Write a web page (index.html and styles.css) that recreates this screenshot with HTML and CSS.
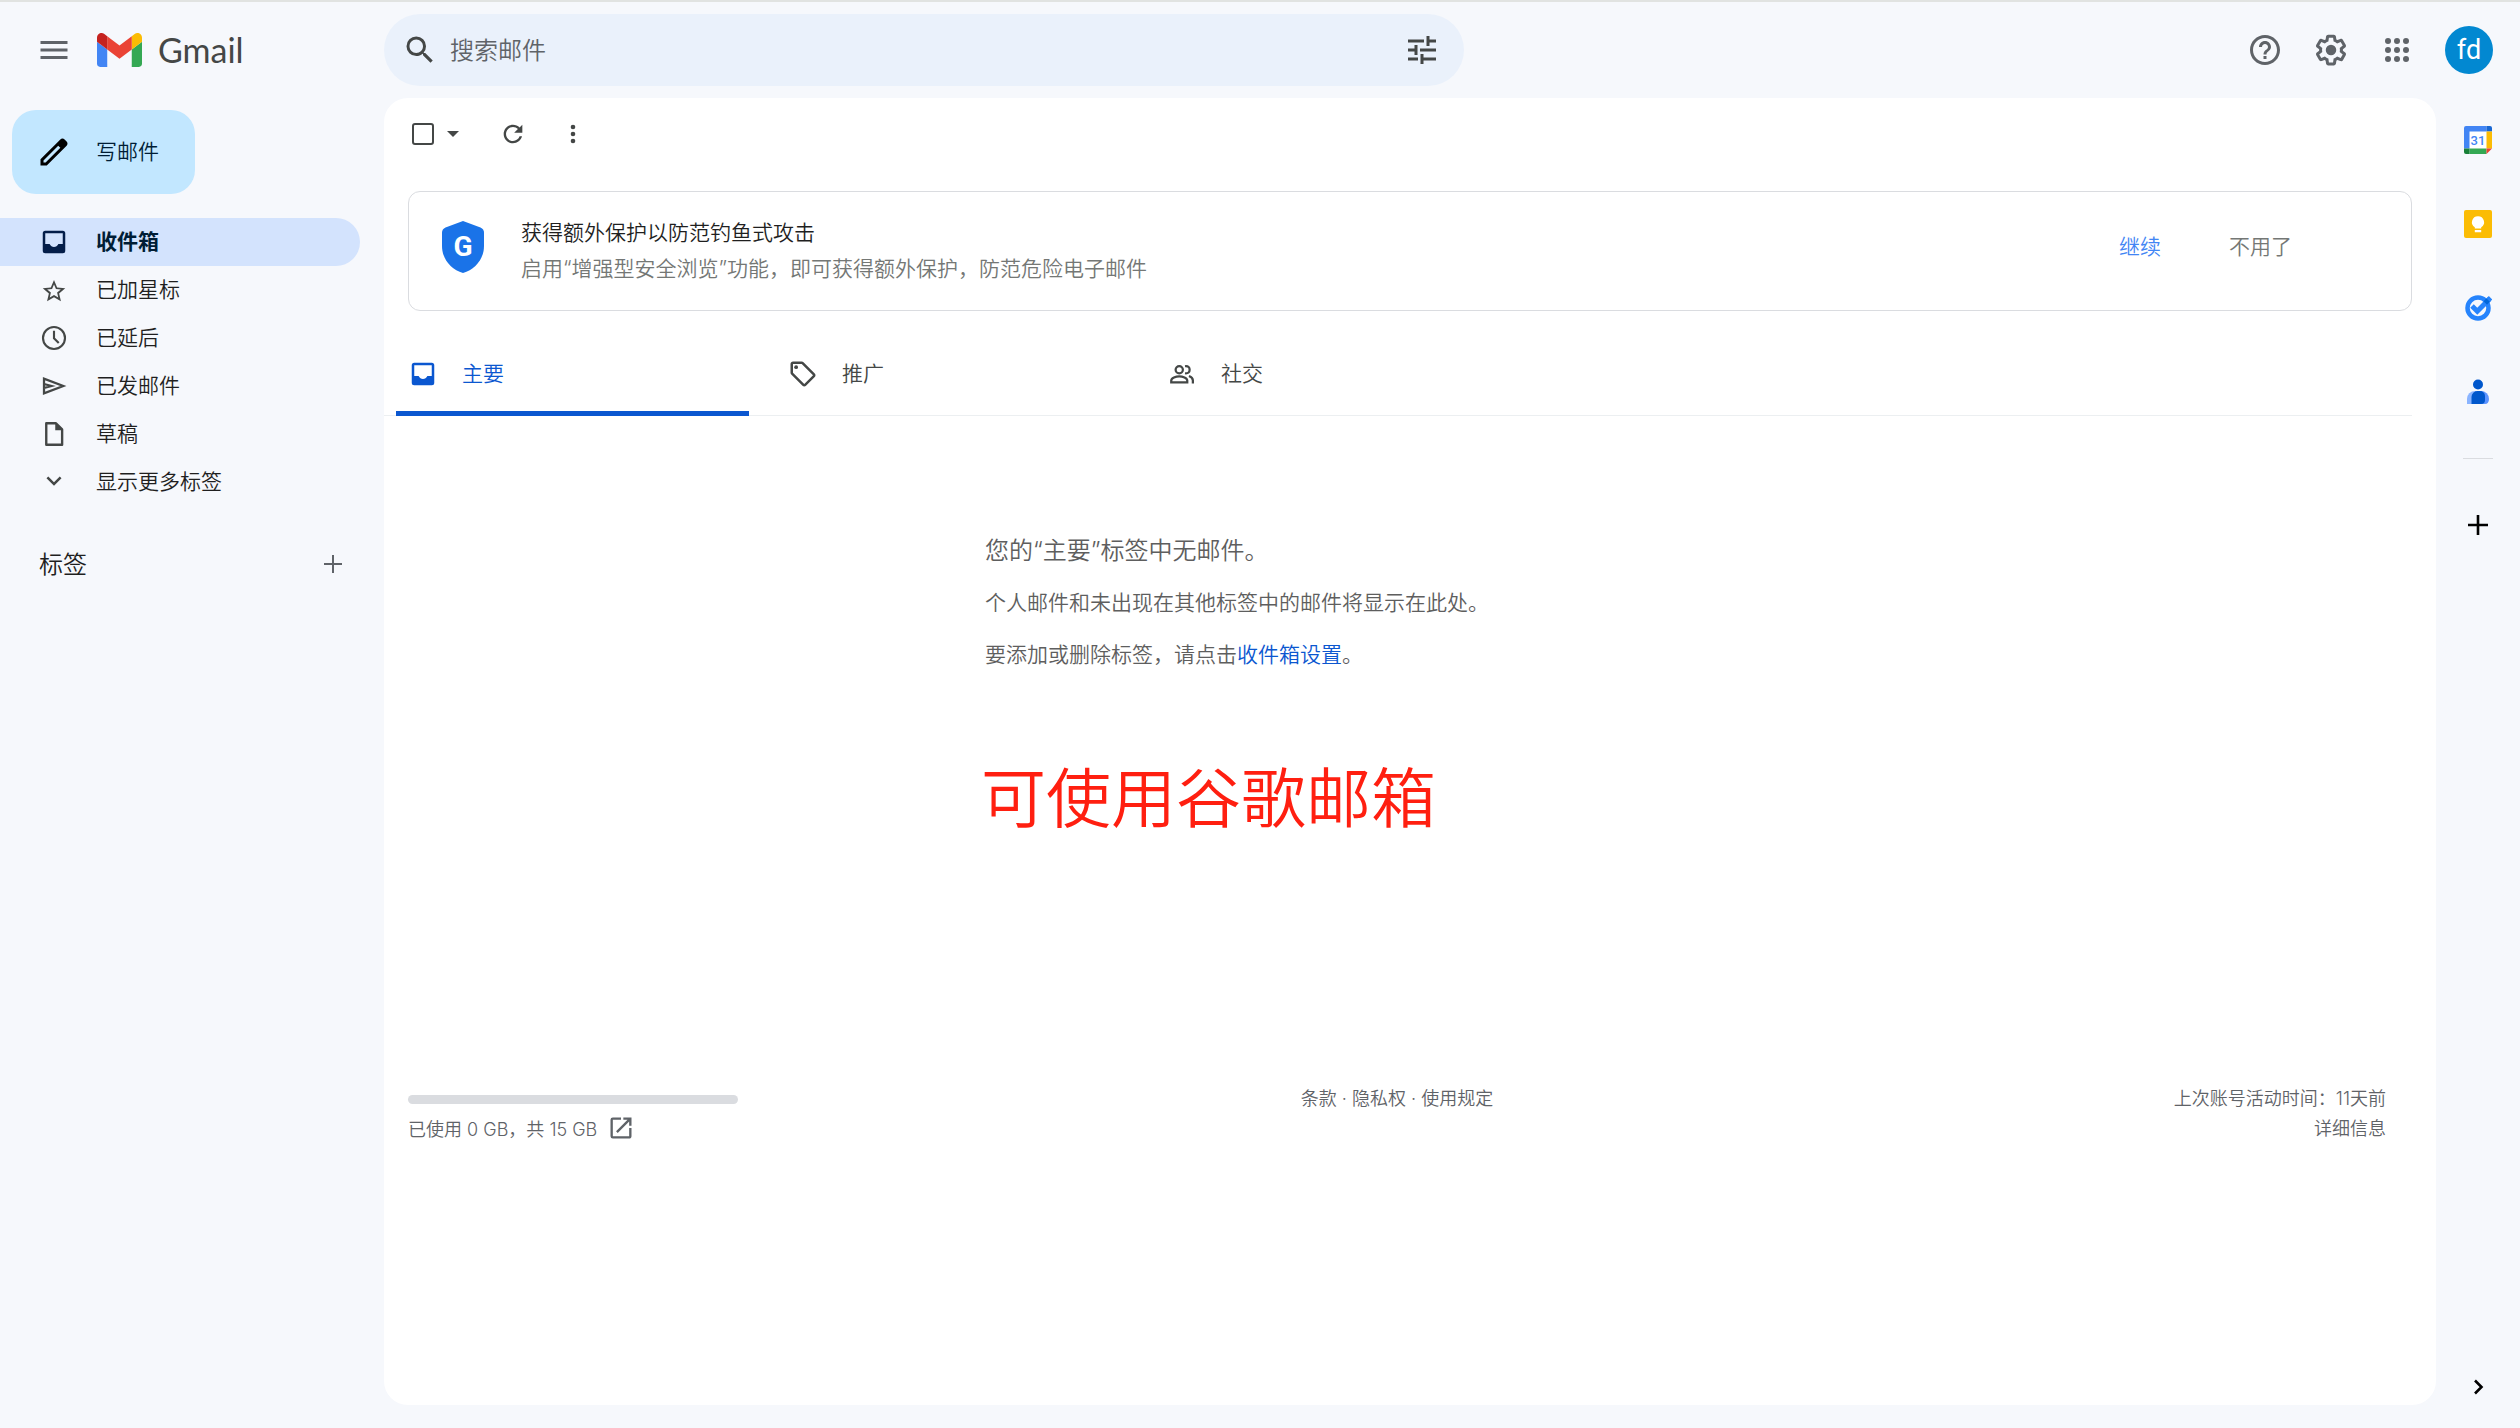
FILE: index.html
```html
<!DOCTYPE html>
<html lang="zh-CN">
<head>
<meta charset="utf-8">
<meta name="viewport" content="width=device-width, initial-scale=1">
<title>Gmail</title>
<link rel="stylesheet" href="styles.css">
</head>
<body>
<header class="topbar">
  <div class="brand">
    <button class="icon-btn" aria-label="主菜单"><svg class="i36" viewBox="0 0 24 24"><path d="M3 18h18v-2H3v2zm0-5h18v-2H3v2zm0-7v2h18V6H3z"/></svg></button>
    <a class="logo" href="#">
      <svg class="logo-mark" viewBox="52 42 88 66"><path fill="#4285f4" d="M58 108h14V74L52 59v43c0 3.32 2.69 6 6 6"/><path fill="#34a853" d="M120 108h14c3.32 0 6-2.69 6-6V59l-20 15"/><path fill="#fbbc04" d="M120 48v26l20-15v-8c0-7.42-8.47-11.65-14.4-7.2"/><path fill="#ea4335" d="M72 74V48l24 18 24-18v26L96 92"/><path fill="#c5221f" d="M52 51v8l20 15V48l-5.6-4.2c-5.94-4.45-14.4-.22-14.4 7.2"/></svg>
      <span class="logo-text">Gmail</span>
    </a>
  </div>
  <form class="search" role="search">
    <button class="icon-btn dark" type="button" aria-label="搜索"><svg class="i36" viewBox="0 0 24 24"><path d="M15.5 14h-.79l-.28-.27A6.47 6.47 0 0 0 16 9.5 6.5 6.5 0 1 0 9.5 16c1.61 0 3.09-.59 4.23-1.57l.27.28v.79l5 4.99L20.49 19l-4.99-5zm-6 0C7.01 14 5 11.99 5 9.5S7.01 5 9.5 5 14 7.01 14 9.5 11.99 14 9.5 14z"/></svg></button>
    <input class="search-input" type="text" placeholder="搜索邮件" aria-label="搜索邮件">
    <button class="icon-btn dark" type="button" aria-label="显示搜索选项"><svg class="i28" viewBox="0 0 28 28"><path fill="none" stroke="currentColor" stroke-width="3" d="M0 5h16M20 0v10M20 5h8M0 14h8M8 9v10M12 14h16M0 23h10M14 18v10M14 23h14"/></svg></button>
  </form>
  <div class="account">
    <button class="icon-btn" aria-label="支持"><svg class="i36" viewBox="0 0 24 24"><path d="M11 18h2v-2h-2v2zm1-16C6.48 2 2 6.48 2 12s4.48 10 10 10 10-4.48 10-10S17.52 2 12 2zm0 18c-4.41 0-8-3.59-8-8s3.59-8 8-8 8 3.59 8 8-3.59 8-8 8zm0-14c-2.21 0-4 1.79-4 4h2c0-1.1.9-2 2-2s2 .9 2 2c0 2-3 1.75-3 5h2c0-2.25 3-2.5 3-5 0-2.21-1.79-4-4-4z"/></svg></button>
    <button class="icon-btn" aria-label="设置"><svg class="i36" viewBox="0 0 24 24"><path d="M13.85 22.25h-3.7c-.74 0-1.36-.54-1.45-1.27l-.27-1.89c-.27-.14-.53-.29-.79-.46l-1.8.72c-.7.26-1.47-.03-1.81-.65L2.2 15.53c-.35-.66-.2-1.44.36-1.88l1.53-1.19c-.01-.15-.02-.3-.02-.46 0-.15.01-.31.02-.46l-1.52-1.19c-.59-.45-.74-1.26-.37-1.88l1.85-3.19c.34-.62 1.11-.9 1.79-.63l1.81.73c.26-.17.52-.32.78-.46l.27-1.91c.09-.7.71-1.25 1.44-1.25h3.7c.74 0 1.36.54 1.45 1.27l.27 1.89c.27.14.53.29.79.46l1.8-.72c.71-.26 1.48.03 1.82.65l1.84 3.18c.36.66.2 1.44-.36 1.88l-1.52 1.19c.01.15.02.3.02.46s-.01.31-.02.46l1.52 1.19c.56.45.72 1.23.37 1.86l-1.86 3.22c-.34.62-1.11.9-1.8.63l-1.8-.72c-.26.17-.52.32-.78.46l-.27 1.91c-.1.68-.72 1.22-1.46 1.22zm-3.23-2h2.76l.37-2.55.53-.22c.44-.18.88-.44 1.34-.78l.45-.34 2.38.96 1.38-2.4-2.03-1.58.07-.56c.03-.26.06-.51.06-.78s-.03-.53-.06-.78l-.07-.56 2.03-1.58-1.39-2.4-2.39.96-.45-.35c-.42-.32-.87-.58-1.33-.77l-.52-.22-.37-2.55h-2.76l-.37 2.55-.53.21c-.44.19-.88.44-1.34.79l-.45.33-2.38-.95-1.39 2.39 2.03 1.58-.07.56a7 7 0 0 0-.06.79c0 .26.02.53.06.78l.07.56-2.03 1.58 1.38 2.4 2.39-.96.45.35c.43.33.86.58 1.33.77l.53.22.38 2.55z"/><circle cx="12" cy="12" r="3.5"/></svg></button>
    <button class="icon-btn" aria-label="Google 应用"><svg class="i36" viewBox="0 0 24 24"><circle cx="6" cy="6" r="2"/><circle cx="12" cy="6" r="2"/><circle cx="18" cy="6" r="2"/><circle cx="6" cy="12" r="2"/><circle cx="12" cy="12" r="2"/><circle cx="18" cy="12" r="2"/><circle cx="6" cy="18" r="2"/><circle cx="12" cy="18" r="2"/><circle cx="18" cy="18" r="2"/></svg></button>
    <button class="avatar" aria-label="Google 账号">fd</button>
  </div>
</header>

<div class="workspace">
  <aside class="sidebar">
    <button class="compose"><svg class="i36" viewBox="0 0 24 24"><path d="M20.41 4.94l-1.35-1.35c-.78-.78-2.05-.78-2.83 0L3 16.82V21h4.18L20.41 7.77c.79-.78.79-2.05 0-2.83zM6.41 19.06L5 19v-1.36l9.82-9.82 1.41 1.41-9.82 9.83z"/></svg><span class="label">写邮件</span></button>
    <nav class="folders">
      <a class="folder active" href="#"><svg class="i30" viewBox="0 0 24 24"><path fill-rule="evenodd" d="M5 3h14a2 2 0 0 1 2 2v14a2 2 0 0 1-2 2H5a2 2 0 0 1-2-2V5a2 2 0 0 1 2-2zm0 2v8.5h3.5c.8 1.5 2 2.4 3.5 2.4s2.7-.9 3.5-2.4H19V5z"/></svg><span class="label">收件箱</span></a>
      <a class="folder" href="#"><svg class="i30" viewBox="0 -1 24 24"><path d="M21 9.500l-6.500-.56L12 3 9.460 8.970 3 9.500l4.910 4.260L6.440 20 12 16.740 17.560 20l-1.470-6.240L21 9.500zM12 14.900l-3.380 2.040.9-3.850-2.990-2.590 3.940-.34L12 6.500l1.540 3.660 3.940.34-2.990 2.590.9 3.850L12 14.900z"/></svg><span class="label">已加星标</span></a>
      <a class="folder" href="#"><svg class="i30" viewBox="0 0 24 24"><g fill="none" stroke="currentColor" stroke-width="1.7"><circle cx="12" cy="12" r="8.800"/><path d="M12 6.200v6l3.800 3.800"/></g></svg><span class="label">已延后</span></a>
      <a class="folder" href="#"><svg class="i30" viewBox="0 0 24 24"><path fill="none" stroke="currentColor" stroke-width="1.800" d="M4 6.200v11.600L19.400 12zM4 10.400l6 1.600-6 1.600"/></svg><span class="label">已发邮件</span></a>
      <a class="folder" href="#"><svg class="i30" viewBox="0 0 24 24"><path fill="none" stroke="currentColor" stroke-width="1.900" stroke-linejoin="round" d="M5.800 3.400h7.800l4.900 4.900v12.300H5.800z"/><path d="M13 3v6h6z"/></svg><span class="label">草稿</span></a>
      <a class="folder" href="#"><svg class="i30" viewBox="0 0 24 24"><path d="M16.590 7.590 12 12.170 7.410 7.590 6 9l6 6 6-6z"/></svg><span class="label">显示更多标签</span></a>
    </nav>
    <div class="labels-head">
      <h2 class="labels-title label">标签</h2>
      <button class="icon-btn" aria-label="创建新标签"><svg class="i30" viewBox="0 0 24 24"><path d="M19.200 12.800h-6.400v6.400h-1.600v-6.400H4.800v-1.600h6.400V4.800h1.600v6.400h6.400z"/></svg></button>
    </div>
  </aside>

  <main class="panel">
    <div class="toolbar">
      <div class="select-all">
        <input class="check" type="checkbox" aria-label="选择">
        <button class="caret-btn" aria-label="选择选项"><svg class="caret" viewBox="0 0 12 6"><path d="M0 0h12L6 6z"/></svg></button>
      </div>
      <button class="icon-btn dark" aria-label="刷新"><svg class="i28" viewBox="0 0 24 24"><path d="M17.650 6.350C16.200 4.900 14.210 4 12 4c-4.420 0-7.990 3.580-7.990 8s3.570 8 7.990 8c3.730 0 6.840-2.550 7.730-6h-2.080c-.82 2.330-3.040 4-5.650 4-3.310 0-6-2.690-6-6s2.690-6 6-6c1.660 0 3.140.69 4.220 1.780L13 11h7V4l-2.350 2.350z"/></svg></button>
      <button class="icon-btn dark" aria-label="更多"><svg class="i28" viewBox="0 0 28 28"><circle cx="14" cy="7" r="2.300"/><circle cx="14" cy="14" r="2.300"/><circle cx="14" cy="21" r="2.300"/></svg></button>
    </div>

    <section class="notice">
      <svg class="shield" viewBox="0 0 42 52"><path fill="#1a73e8" d="M21 0l17.500 6.500Q42 8 42 11.500V25c0 13-9 23.500-21 27C9 48.500 0 38 0 25V11.500Q0 8 3.500 6.500z"/><text class="shield-g" x="21" y="35" text-anchor="middle">G</text></svg>
      <div class="notice-text">
        <h2 class="notice-title">获得额外保护以防范钓鱼式攻击</h2>
        <p class="notice-sub">启用“增强型安全浏览”功能，即可获得额外保护，防范危险电子邮件</p>
      </div>
      <div class="notice-actions">
        <button class="text-btn primary">继续</button>
        <button class="text-btn">不用了</button>
      </div>
    </section>

    <div class="tabs" role="tablist">
      <button class="tab active" role="tab" aria-selected="true"><svg class="i30" viewBox="0 0 24 24"><path fill-rule="evenodd" d="M5 3h14a2 2 0 0 1 2 2v14a2 2 0 0 1-2 2H5a2 2 0 0 1-2-2V5a2 2 0 0 1 2-2zm0 2v8.500h3.500c.8 1.500 2 2.400 3.500 2.400s2.700-.9 3.500-2.400H19V5z"/></svg><span class="label">主要</span></button>
      <button class="tab" role="tab" aria-selected="false"><svg class="i30" viewBox="0 0 24 24"><path d="M21.410 11.580l-9-9C12.050 2.220 11.550 2 11 2H4c-1.100 0-2 .9-2 2v7c0 .55.22 1.050.59 1.420l9 9c.36.36.86.58 1.410.58s1.050-.22 1.410-.59l7-7c.37-.36.59-.86.59-1.410s-.23-1.060-.59-1.420zM13 20.010L4 11V4h7v-.01l9 9-7 7.020z"/><circle cx="6.500" cy="6.500" r="1.500"/></svg><span class="label">推广</span></button>
      <button class="tab" role="tab" aria-selected="false"><svg class="i30" viewBox="0 0 24 24"><g fill="none" stroke="currentColor" stroke-width="1.800"><circle cx="9.800" cy="8.600" r="2.900"/><path d="M3.400 18.600v-1.400c0-2 3.700-3.400 6.400-3.400s6.400 1.400 6.400 3.400v1.400z"/><path d="M14.400 5.800c2.800-.3 3.700 1 3.700 2.800s-1 3.100-3.700 2.800"/><path d="M17.600 13.600c1.900.8 3.100 2 3.100 3.500v2.400"/></g></svg><span class="label">社交</span></button>
    </div>

    <section class="empty">
      <h1 class="empty-title">您的“主要”标签中无邮件。</h1>
      <p class="empty-line">个人邮件和未出现在其他标签中的邮件将显示在此处。</p>
      <p class="empty-line">要添加或删除标签，请点击<a class="link" href="#">收件箱设置</a>。</p>
      <p class="annotation">可使用谷歌邮箱</p>
    </section>

    <footer class="footer">
      <div class="storage">
        <div class="storage-bar"></div>
        <div class="storage-row"><span>已使用 0 GB，共 15 GB</span><a class="storage-link" href="#" aria-label="管理存储空间"><svg class="i28" viewBox="0 0 24 24"><path d="M19 19H5V5h7V3H5a2 2 0 0 0-2 2v14a2 2 0 0 0 2 2h14c1.100 0 2-.9 2-2v-7h-2v7zM14 3v2h3.590l-9.830 9.830 1.410 1.410L19 6.410V10h2V3h-7z"/></svg></a></div>
      </div>
      <div class="legal"><a href="#">条款</a> · <a href="#">隐私权</a> · <a href="#">使用规定</a></div>
      <div class="activity"><div>上次账号活动时间：11天前</div><a href="#">详细信息</a></div>
    </footer>
  </main>

  <aside class="rail">
    <div class="rail-apps">
      <button class="rail-btn" aria-label="日历"><svg class="i28" viewBox="0 0 28 28"><path fill="#fff" d="M5 5h18v18H5z"/><path fill="#4285f4" d="M2 0h20.500v5.500h-17v17H0V2a2 2 0 0 1 2-2z"/><path fill="#1967d2" d="M22.500 0H26a2 2 0 0 1 2 2v3.500h-5.500z"/><path fill="#fbbc04" d="M22.500 5.500H28v17h-5.500z"/><path fill="#34a853" d="M5.500 22.500h17V28h-17z"/><path fill="#188038" d="M0 22.500h5.500V28H2a2 2 0 0 1-2-2z"/><path fill="#ea4335" d="M22.500 22.500H28L22.500 28z"/><text class="cal-day" x="14" y="19" text-anchor="middle">31</text></svg></button>
      <button class="rail-btn" aria-label="Keep"><svg class="i28" viewBox="0 0 28 28"><rect width="28" height="28" rx="2" fill="#fbbc04"/><path fill="#fff" d="M14 6.200a6 6 0 0 0-3.200 11.100v1.200h6.400v-1.200A6 6 0 0 0 14 6.200zM10.800 20h6.400v2.200h-6.400z"/></svg></button>
      <button class="rail-btn" aria-label="Tasks"><svg class="i28" viewBox="0 0 28 28"><circle cx="14" cy="14" r="10.500" fill="none" stroke="#2684fc" stroke-width="4.500"/><path fill="none" stroke="#2684fc" stroke-width="5" d="M8 12l5.300 5.300L25.500 5"/><path fill="#0066da" d="M19.500 7.300l3-3 3.500 3.500-3 3z"/><path fill="#2684fc" d="M22.500 4.300l2.300-2.300 3.500 3.500-2.300 2.300z"/></svg></button>
      <button class="rail-btn" aria-label="通讯录"><svg class="i28" viewBox="0 0 28 28"><circle cx="14" cy="6.500" r="5" fill="#0057cc"/><path fill="#8ab4ff" d="M3 26v-5a8 8 0 0 1 8-8h6v13z"/><path fill="#5c94ff" d="M11 13h6a8 8 0 0 1 8 8c0 3-1.500 5-4 5H11z"/><path fill="#0057cc" d="M7.500 26v-7a6 6 0 0 1 6-6H16a5 5 0 0 1 5 5v4a4 4 0 0 1-4 4z"/></svg></button>
    </div>
    <hr class="rail-line">
    <button class="rail-btn" aria-label="获取插件"><svg class="i28" viewBox="0 0 28 28"><path fill="none" stroke="currentColor" stroke-width="2.600" d="M4 14h20M14 4v20"/></svg></button>
    <button class="rail-btn rail-hide" aria-label="隐藏侧边栏"><svg class="i28" viewBox="0 0 28 28"><path fill="none" stroke="currentColor" stroke-width="2.600" d="M11 7.500l6.500 6.500-6.500 6.500"/></svg></button>
  </aside>
</div>
</body>
</html>
```

FILE: styles.css
```css
* {
  box-sizing: border-box;
}

body {
  margin: 0;
  min-height: 100vh;
  display: flex;
  flex-direction: column;
  border-top: 2px solid #e1e3e1;
  background: #f6f8fc;
  color: #1f1f1f;
  font-family: Inter, "Noto Sans CJK SC", sans-serif;
  font-size: 21px;
  font-weight: 350;
}

h1, h2, p {
  margin: 0;
  font-size: inherit;
  font-weight: inherit;
}

a {
  color: inherit;
  text-decoration: none;
}

button {
  margin: 0;
  padding: 0;
  border: 0;
  background: none;
  color: inherit;
  font: inherit;
  cursor: pointer;
}

svg {
  display: block;
  flex: none;
  fill: currentColor;
}

.i28 { width: 28px; height: 28px; }
.i30 { width: 30px; height: 30px; }
.i36 { width: 36px; height: 36px; }

/* Text beside an icon, lifted to sit on the icon's optical centre */
.label {
  padding-bottom: 4px;
}

.icon-btn {
  display: grid;
  place-items: center;
  width: 60px;
  height: 60px;
  color: #5f6368;
}

.icon-btn.dark {
  color: #444746;
}

/* Top bar */
.topbar {
  display: flex;
  align-items: center;
  height: 96px;
}

.brand {
  display: flex;
  align-items: center;
  flex: none;
  gap: 13px;
  width: 384px;
  padding-left: 24px;
}

.logo {
  display: flex;
  align-items: center;
  gap: 16px;
}

.logo-mark {
  width: 45px;
  height: 34px;
}

.logo-text {
  color: #444746;
  font: 400 34px/40px Lato, sans-serif;
}

.search {
  display: flex;
  align-items: center;
  flex: 0 1 1080px;
  height: 72px;
  padding: 0 12px 0 6px;
  border-radius: 36px;
  background: #eaf1fb;
}

.search-input {
  flex: 1;
  min-width: 0;
  padding: 0;
  border: 0;
  outline: 0;
  background: none;
  color: #1f1f1f;
  font: inherit;
  font-size: 24px;
}

.search-input::placeholder {
  color: #5f6368;
  opacity: 1;
}

.account {
  display: flex;
  align-items: center;
  gap: 6px;
  margin-left: auto;
  padding-right: 27px;
}

.avatar {
  width: 48px;
  height: 48px;
  margin-left: 12px;
  border-radius: 50%;
  background: #0288d1;
  color: #fff;
  font: 400 27px/48px Roboto, sans-serif;
}

/* Columns */
.workspace {
  flex: 1;
  display: grid;
  grid-template-columns: 384px minmax(0, 1fr) 84px;
  padding-bottom: 23px;
}

.sidebar {
  padding-top: 12px;
}

.compose {
  display: flex;
  align-items: center;
  gap: 24px;
  height: 84px;
  margin-left: 12px;
  padding: 0 36px 0 24px;
  border-radius: 24px;
  background: #c2e7ff;
  color: #001d35;
}

.compose svg {
  color: #000;
}

.folders {
  margin: 24px 24px 0 0;
}

.folder {
  display: flex;
  align-items: center;
  gap: 27px;
  height: 48px;
  padding-left: 39px;
  border-radius: 0 24px 24px 0;
}

.folder svg {
  color: #444746;
}

.folder.active {
  background: #d3e3fd;
  color: #001d35;
  font-weight: 700;
}

.folder.active svg {
  color: #041e49;
}

.labels-head {
  display: flex;
  align-items: center;
  justify-content: space-between;
  height: 48px;
  margin-top: 34px;
  padding: 0 21px 0 39px;
}

.labels-title {
  font-size: 24px;
}

/* Mail panel */
.panel {
  border-radius: 24px;
  background: #fff;
}

.toolbar {
  display: flex;
  align-items: center;
  height: 72px;
  padding-left: 28px;
}

.select-all {
  display: flex;
  align-items: center;
  gap: 7px;
  margin-right: 18px;
}

.check {
  appearance: none;
  width: 22px;
  height: 22px;
  margin: 0;
  border: 2px solid #444746;
  border-radius: 3px;
}

.caret-btn {
  display: grid;
  place-items: center;
  width: 24px;
  height: 30px;
  color: #444746;
}

.caret {
  width: 12px;
  height: 6px;
}

.notice {
  display: flex;
  align-items: center;
  margin: 21px 24px 0;
  padding: 0 107px 0 33px;
  height: 120px;
  border: 1px solid #dadce0;
  border-radius: 12px;
}

.shield {
  width: 42px;
  height: 52px;
  margin: 0 37px 8px 0;
}

.shield-g {
  fill: #fff;
  font: 700 28px Roboto, sans-serif;
}

.notice-text {
  flex: 1;
  line-height: 36px;
}

.notice-sub {
  color: #747775;
}

.notice-actions {
  display: flex;
  gap: 44px;
  margin-bottom: 12px;
}

.text-btn {
  padding: 6px 12px;
  color: #747775;
}

.text-btn.primary {
  color: #4285f4;
}

.tabs {
  display: flex;
  height: 84px;
  margin: 21px 24px 0 0;
  border-bottom: 1px solid #eceff1;
}

.tab {
  display: flex;
  align-items: center;
  gap: 24px;
  flex: 0 1 379px;
  padding-left: 25px;
  color: #444746;
}

.tab.active {
  flex: 0 1 353px;
  margin: 0 14px -1px 12px;
  padding: 4px 0 0 12px;
  border-bottom: 5px solid #0b57d0;
  color: #0b57d0;
}

.empty {
  display: flex;
  flex-direction: column;
  gap: 20px;
  max-width: 850px;
  margin: 119px auto 0;
  color: #5e5e5e;
  line-height: 32px;
}

.empty-title {
  font-size: 24px;
}

.link {
  color: #0b57d0;
}

.annotation {
  margin: 68px 0 0 -4px;
  color: #ff1f10;
  font-size: 65px;
  line-height: 80px;
}

/* Footer */
.footer {
  display: grid;
  grid-template-columns: 1fr auto 1fr;
  margin: 245px 50px 0 24px;
  color: #5f6368;
  font-size: 18px;
  line-height: 30px;
}

.storage-bar {
  width: 330px;
  height: 9px;
  margin-top: 11px;
  border-radius: 5px;
  background: #dadce0;
}

.storage-row {
  display: flex;
  align-items: center;
  gap: 10px;
  margin-top: 10px;
}

.storage-link {
  padding-bottom: 3px;
}

.activity {
  text-align: right;
}

/* Side rail */
.rail {
  display: flex;
  flex-direction: column;
  align-items: center;
}

.rail-apps {
  display: flex;
  flex-direction: column;
}

.rail-btn {
  display: grid;
  place-items: center;
  width: 84px;
  height: 84px;
  color: #000;
}

.rail-line {
  width: 30px;
  margin: 24px 0;
  border: 0;
  border-top: 1px solid #dadce0;
}

.rail-hide {
  height: 36px;
  margin-top: auto;
}

.cal-day {
  fill: #4285f4;
  font: 500 13px Roboto, sans-serif;
}
```
